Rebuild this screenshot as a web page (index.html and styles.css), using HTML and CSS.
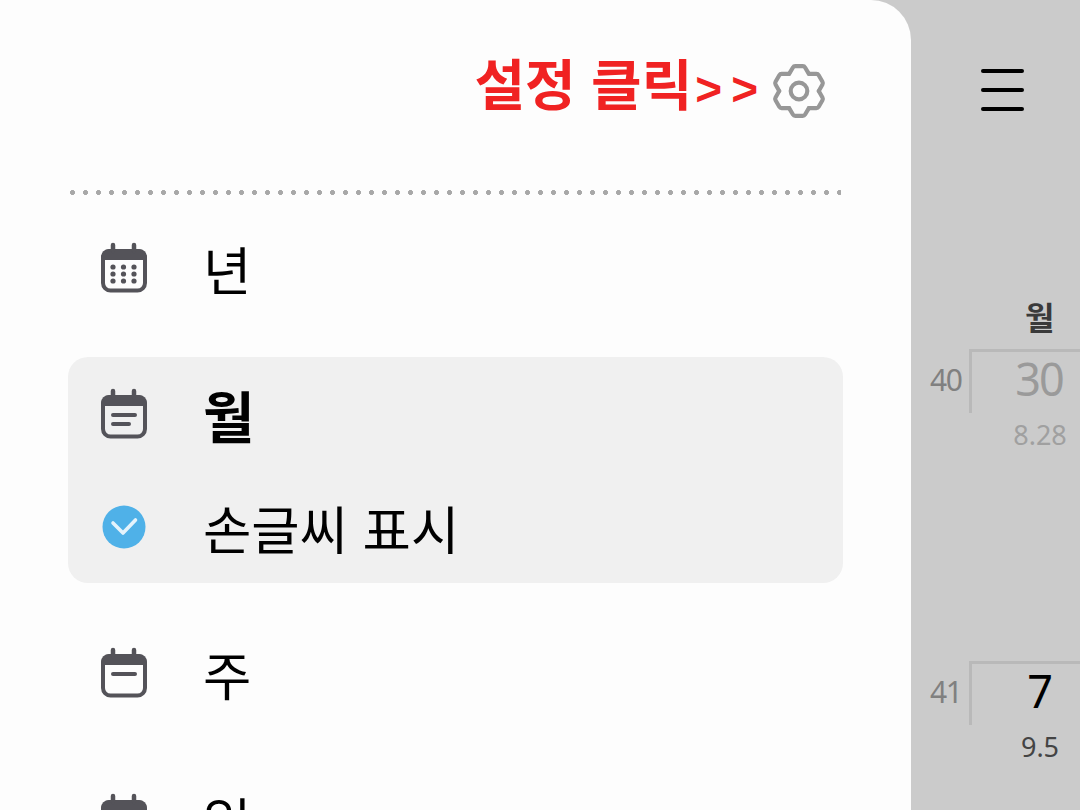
FILE: index.html
```html
<!DOCTYPE html>
<html lang="ko">
<head>
    <title>캘린더</title>
    <link rel="stylesheet" href="styles.css">
</head>
<body>
    <div class="drawer">
        <div class="drawer-header">
            <span class="hint">설정 클릭<span class="hint-arrows">&gt;&gt;</span></span>
            <svg class="gear" width="54" height="54" viewBox="0 0 52 52" fill="none" stroke="#979797" stroke-width="4" stroke-linecap="round">
                <g id="tooth">
                    <path d="M16.5 9.5L20.14 3.3Q20.9 2 22.4 2H29.6Q31.1 2 31.86 3.3L35.5 9.5"/>
                </g>
                <use href="#tooth" transform="rotate(60 26 26)"/>
                <use href="#tooth" transform="rotate(120 26 26)"/>
                <use href="#tooth" transform="rotate(180 26 26)"/>
                <use href="#tooth" transform="rotate(240 26 26)"/>
                <use href="#tooth" transform="rotate(300 26 26)"/>
                <circle cx="26" cy="26" r="8"/>
            </svg>
        </div>
        <div class="dots"></div>

        <div class="menu">
            <div class="menu-row">
                <svg class="cal-icon" width="48" height="52" viewBox="0 0 48 52">
                    <use href="#cal"/>
                    <g fill="#545359">
                        <circle cx="13" cy="25" r="2.600"/><circle cx="23.500" cy="25" r="2.600"/><circle cx="34" cy="25" r="2.600"/>
                        <circle cx="13" cy="32" r="2.600"/><circle cx="23.500" cy="32" r="2.600"/><circle cx="34" cy="32" r="2.600"/>
                        <circle cx="13" cy="39" r="2.600"/><circle cx="23.500" cy="39" r="2.600"/><circle cx="34" cy="39" r="2.600"/>
                    </g>
                </svg>
                <span class="menu-label">년</span>
            </div>

            <div class="menu-active">
                <div class="menu-row">
                    <svg class="cal-icon" width="48" height="52" viewBox="0 0 48 52">
                        <use href="#cal"/>
                        <path d="M13 27H35M13 36H29" stroke="#545359" stroke-width="4" stroke-linecap="round"/>
                    </svg>
                    <span class="menu-label bold">월</span>
                </div>
                <div class="menu-row">
                    <svg class="check-icon" width="48" height="48" viewBox="0 0 48 48">
                        <circle cx="24" cy="24" r="21.500" fill="#4fb1e8"/>
                        <path d="M13 20L23 30L35.500 17" fill="none" stroke="#e4f3fc" stroke-width="3.600" stroke-linecap="round" stroke-linejoin="round"/>
                    </svg>
                    <span class="menu-label">손글씨 표시</span>
                </div>
            </div>

            <div class="menu-row">
                <svg class="cal-icon" width="48" height="52" viewBox="0 0 48 52">
                    <use href="#cal"/>
                    <path d="M13 27H35" stroke="#545359" stroke-width="4" stroke-linecap="round"/>
                </svg>
                <span class="menu-label">주</span>
            </div>

            <div class="menu-row">
                <svg class="cal-icon" width="48" height="52" viewBox="0 0 48 52">
                    <use href="#cal"/>
                </svg>
                <span class="menu-label">일</span>
            </div>
        </div>
    </div>

    <div class="calendar">
        <div class="hamburger"><i></i><i></i><i></i></div>
        <div class="weekday">월</div>
        <div class="week">
            <div class="week-no">40</div>
            <div class="day-cell">
                <div class="day-num faded">30</div>
            </div>
            <div class="lunar faded-lunar">8.28</div>
        </div>
        <div class="week second">
            <div class="week-no">41</div>
            <div class="day-cell">
                <div class="day-num">7</div>
            </div>
            <div class="lunar">9.5</div>
        </div>
    </div>

    <svg class="defs" width="0" height="0">
        <defs>
            <g id="cal">
                <rect x="3" y="9" width="42" height="39.500" rx="7.500" fill="none" stroke="#545359" stroke-width="4"/>
                <path d="M9 7H39A8 8 0 0 1 47 15V18H1V15A8 8 0 0 1 9 7Z" fill="#545359"/>
                <path d="M13 3V9M34 3V9" stroke="#545359" stroke-width="4.500" stroke-linecap="round"/>
            </g>
        </defs>
    </svg>
</body>
</html>
```
FILE: styles.css
```css
html, body {
    margin: 0;
    height: 810px;
    overflow: hidden;
}
body {
    display: flex;
    background-color: #cbcbcb;
    font-family: "Noto Sans CJK KR", "Noto Sans", sans-serif;
    color: #000;
}
.defs {
    position: absolute;
}

/* drawer */
.drawer {
    width: 775px;
    height: 810px;
    flex-shrink: 0;
    padding-left: 68px;
    padding-right: 68px;
    background-color: #fdfdfd;
    border-top-right-radius: 40px;
}
.drawer-header {
    height: 190px;
    display: flex;
    justify-content: flex-end;
    align-items: flex-start;
    padding-right: 17px;
    box-sizing: border-box;
}
.hint {
    margin-top: 43px;
    margin-right: 5px;
    color: #f02222;
    font-size: 55px;
    line-height: 76px;
    font-weight: 700;
    white-space: nowrap;
}
.hint-arrows {
    margin-left: 3px;
    font-family: "Liberation Sans", sans-serif;
    font-size: 46px;
    letter-spacing: 9px;
    font-weight: 700;
}
.gear {
    margin-top: 64px;
    margin-left: 0;
}
.dots {
    height: 5px;
    margin: 0 2px;
    background-image: radial-gradient(circle at 2.5px 2.5px, #a8a8a8 2.2px, transparent 2.8px);
    background-size: 13px 5px;
    background-repeat: repeat-x;
}

/* menu */
.menu {
    margin-top: 16px;
    display: flex;
    flex-direction: column;
    gap: 33px;
}
.menu-row {
    height: 113px;
    display: grid;
    grid-template-columns: 48px 1fr;
    column-gap: 55px;
    align-items: center;
    padding-left: 32px;
}
.menu-active {
    background-color: #f0f0f0;
    border-radius: 20px;
}
.menu-label {
    font-size: 52.5px;
    line-height: 72px;
    white-space: nowrap;
}
.bold {
    font-size: 56px;
    font-weight: 700;
}

/* calendar behind the drawer */
.calendar {
    flex: 1;
    min-width: 0;
    position: relative;
}
.hamburger {
    margin: 69px 0 0 70px;
    width: 43px;
    display: flex;
    flex-direction: column;
    gap: 15px;
}
.hamburger i {
    height: 4px;
    background-color: #000;
    border-radius: 2px;
}
.weekday {
    margin-top: 183px;
    margin-left: 114px;
    font-size: 32px;
    line-height: 44px;
    font-weight: 700;
    color: #3a3a3a;
    white-space: nowrap;
}
.week {
    height: 312px;
    margin-top: 11px;
    display: grid;
    grid-template-columns: 58px 1fr;
    align-content: start;
}
.second {
    margin-top: 0;
}
.week-no {
    padding-top: 9px;
    padding-left: 19px;
    font-family: "Noto Sans", sans-serif;
    font-size: 30px;
    letter-spacing: -1.5px;
    line-height: 44px;
    color: #808080;
}
.day-cell {
    height: 61px;
    border-top: 3px solid #b9b9b9;
    border-left: 3px solid #b9b9b9;
    text-align: center;
}
.day-num {
    width: 136px;
    margin-left: -1px;
    margin-top: -2px;
    font-family: "Noto Sans", sans-serif;
    font-size: 45px;
    letter-spacing: -2px;
    line-height: 58px;
    color: #000;
}
.faded {
    color: #9a9a9a;
}
.lunar {
    grid-column: 2;
    width: 136px;
    margin-left: 3px;
    margin-top: 2px;
    text-align: center;
    font-family: "Noto Sans", sans-serif;
    font-size: 27px;
    line-height: 40px;
    color: #444;
}
.faded-lunar {
    color: #a0a0a0;
}
```
